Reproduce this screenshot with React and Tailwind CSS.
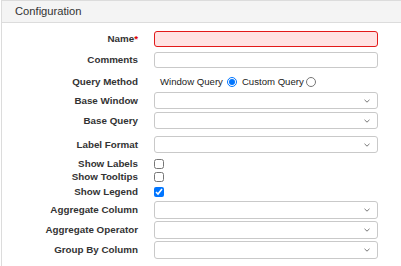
import React from "react";

const font = { fontFamily: '"Liberation Sans", Arial, sans-serif' };

function Chevron() {
  return (
    <svg width="6" height="4" viewBox="0 0 6 4" className="absolute right-[7px] top-1/2 -translate-y-1/2">
      <path d="M0.5 0.8 L3 3.2 L5.5 0.8" fill="none" stroke="#777" strokeWidth="1" />
    </svg>
  );
}

function Label({ children }) {
  return (
    <div className="text-right font-bold text-[9.8px] leading-none text-[#333] whitespace-nowrap">{children}</div>
  );
}

function Row({ label, mt, h, children }) {
  return (
    <div className={`grid grid-cols-[136px_224px] gap-x-[16px] items-center ${mt} ${h}`}>
      <Label>{label}</Label>
      <div className="h-full flex items-center">{children}</div>
    </div>
  );
}

function Select() {
  return (
    <div className="relative w-full h-full rounded-[3px] border border-[#c9c9c9] bg-white">
      <Chevron />
    </div>
  );
}

function Check({ checked }) {
  return (
    <input
      type="checkbox"
      defaultChecked={checked}
      className="m-0 w-[10px] h-[10px]"
    />
  );
}

export default function App() {
  return (
    <div className="w-[401px] h-[266px] bg-white overflow-hidden" style={font}>
      <div className="ml-[1px] h-[266px] border-l border-t border-[#dcdcdc]">
        <div className="h-[22px] bg-[#f4f4f4] border-b border-[#dcdcdc] pl-[13px] flex items-center text-[11.2px] text-[#333]">
          Configuration
        </div>
        <div className="flex flex-col">
          <Row
            mt="mt-[8px]"
            h="h-[16px]"
            label={<>Name<span className="text-[#d00]">*</span></>}
          >
            <div className="w-full h-full rounded-[3px] border border-[#e21a1a] bg-[#ffe3e3]" />
          </Row>
          <Row mt="mt-[5px]" h="h-[16px]" label="Comments">
            <div className="w-full h-full rounded-[3px] border border-[#c9c9c9] bg-white" />
          </Row>
          <Row mt="mt-[8px]" h="h-[12px]" label="Query Method">
            <div className="flex items-center pl-[6px] text-[9.6px] text-[#222] leading-none">
              <span>Window Query</span>
              <input type="radio" name="qm" defaultChecked className="m-0 ml-[4px] w-[10px] h-[10px]" />
              <span className="ml-[5px]">Custom Query</span>
              <input type="radio" name="qm" className="m-0 ml-[2px] w-[10px] h-[10px]" />
            </div>
          </Row>
          <Row mt="mt-[4px]" h="h-[17px]" label="Base Window"><Select /></Row>
          <Row mt="mt-[3px]" h="h-[17px]" label="Base Query"><Select /></Row>
          <Row mt="mt-[7px]" h="h-[17px]" label="Label Format"><Select /></Row>
          <Row mt="mt-[6px]" h="h-[10px]" label="Show Labels"><Check /></Row>
          <Row mt="mt-[3px]" h="h-[10px]" label="Show Tooltips"><Check /></Row>
          <Row mt="mt-[5px]" h="h-[10px]" label="Show Legend"><Check checked /></Row>
          <Row mt="mt-[4px]" h="h-[18px]" label="Aggregate Column"><Select /></Row>
          <Row mt="mt-[2px]" h="h-[18px]" label="Aggregate Operator"><Select /></Row>
          <Row mt="mt-[2px]" h="h-[18px]" label="Group By Column"><Select /></Row>
        </div>
      </div>
    </div>
  );
}
